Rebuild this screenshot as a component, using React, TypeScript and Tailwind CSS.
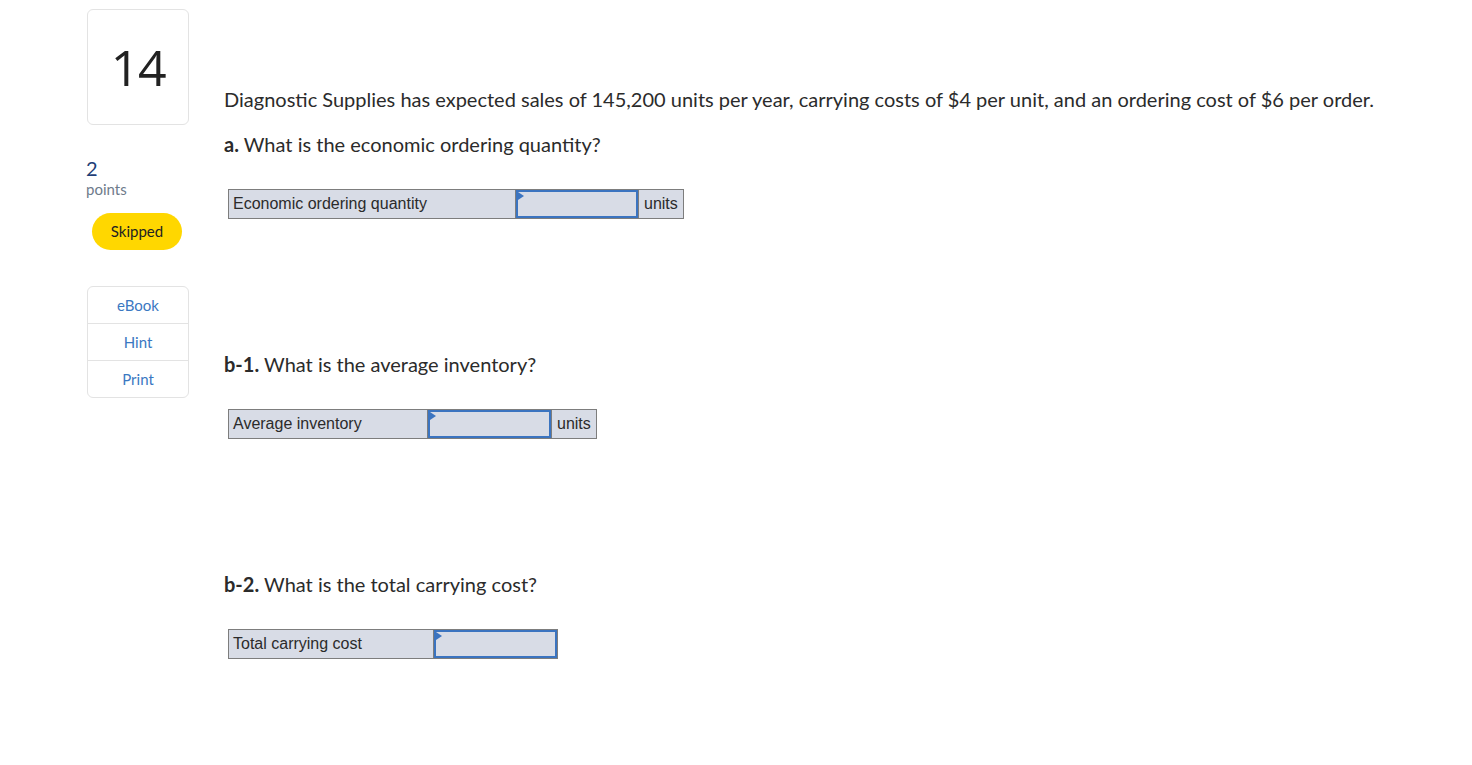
const sans = "font-['Lato','Open_Sans',sans-serif]";
const arial = "font-['Liberation_Sans',Arial,sans-serif]";

function AnswerRow({
  label,
  labelWidth,
  inputWidth,
  unit,
}: {
  label: string;
  labelWidth: number;
  inputWidth: number;
  unit?: string;
}) {
  return (
    <div className="flex h-[30px] w-fit border border-[#7d7d7d] bg-[#d8dce6] ml-1">
      <div
        className={`flex items-center px-[4px] text-[16px] text-[#2b2b2b] ${arial}`}
        style={{ width: labelWidth }}
      >
        {label}
      </div>
      <div className="border-l border-[#7d7d7d] h-full" style={{ width: inputWidth }}>
        <div className="relative h-full w-full border-2 border-[#3b74c0]">
          <div className="absolute left-0 top-0 w-0 h-0 border-t-[4px] border-b-[4px] border-l-[6px] border-t-transparent border-b-transparent border-l-[#3b74c0]" />
        </div>
      </div>
      {unit && (
        <div
          className={`flex items-center border-l border-[#7d7d7d] px-[5px] text-[16px] text-[#2b2b2b] ${arial}`}
        >
          {unit}
        </div>
      )}
    </div>
  );
}

export default function App() {
  return (
    <div className={`min-h-screen bg-white flex ${sans}`}>
      {/* Left rail */}
      <div className="ml-[86px] w-[103px] flex flex-col">
        <div className="mt-[9px] ml-px h-[116px] w-[102px] rounded-md border border-[#e3e3e3] flex items-center justify-center">
          <span className="text-[50px] leading-none text-[#222] font-['Open_Sans',sans-serif] tracking-tight">14</span>
        </div>
        <div className="mt-[31px] text-[20px] leading-[24px] text-[#1f3f78]">2</div>
        <div className="text-[15px] leading-[18px] text-[#6e7b8b]">points</div>
        <div className="mt-[15px] ml-[6px] h-[37px] w-[90px] rounded-full bg-[#ffd700] flex items-center justify-center text-[15px] text-[#222]">
          Skipped
        </div>
        <div className="mt-[36px] ml-px w-[102px] rounded-md border border-[#e3e3e3] flex flex-col text-[15px] text-[#3a78c2]">
          <div className="h-[37px] flex items-center justify-center border-b border-[#e3e3e3]">eBook</div>
          <div className="h-[37px] flex items-center justify-center border-b border-[#e3e3e3]">Hint</div>
          <div className="h-[36px] flex items-center justify-center">Print</div>
        </div>
      </div>

      {/* Question */}
      <div className="ml-[35px] flex flex-col text-[20px] leading-[24px] text-[#2b2b2b]">
        <p className="mt-[87px]">
          Diagnostic Supplies has expected sales of 145,200 units per year, carrying costs of $4 per unit, and an ordering cost of $6 per order.
        </p>
        <p className="mt-[21px]">
          <b className="font-bold">a.</b> What is the economic ordering quantity?
        </p>
        <div className="mt-[33px]">
          <AnswerRow label="Economic ordering quantity" labelWidth={286} inputWidth={123} unit="units" />
        </div>

        <p className="mt-[133px]">
          <b className="font-bold">b-1.</b> What is the average inventory?
        </p>
        <div className="mt-[33px]">
          <AnswerRow label="Average inventory" labelWidth={198} inputWidth={124} unit="units" />
        </div>

        <p className="mt-[133px]">
          <b className="font-bold">b-2.</b> What is the total carrying cost?
        </p>
        <div className="mt-[33px]">
          <AnswerRow label="Total carrying cost" labelWidth={204} inputWidth={124} />
        </div>
      </div>
    </div>
  );
}
